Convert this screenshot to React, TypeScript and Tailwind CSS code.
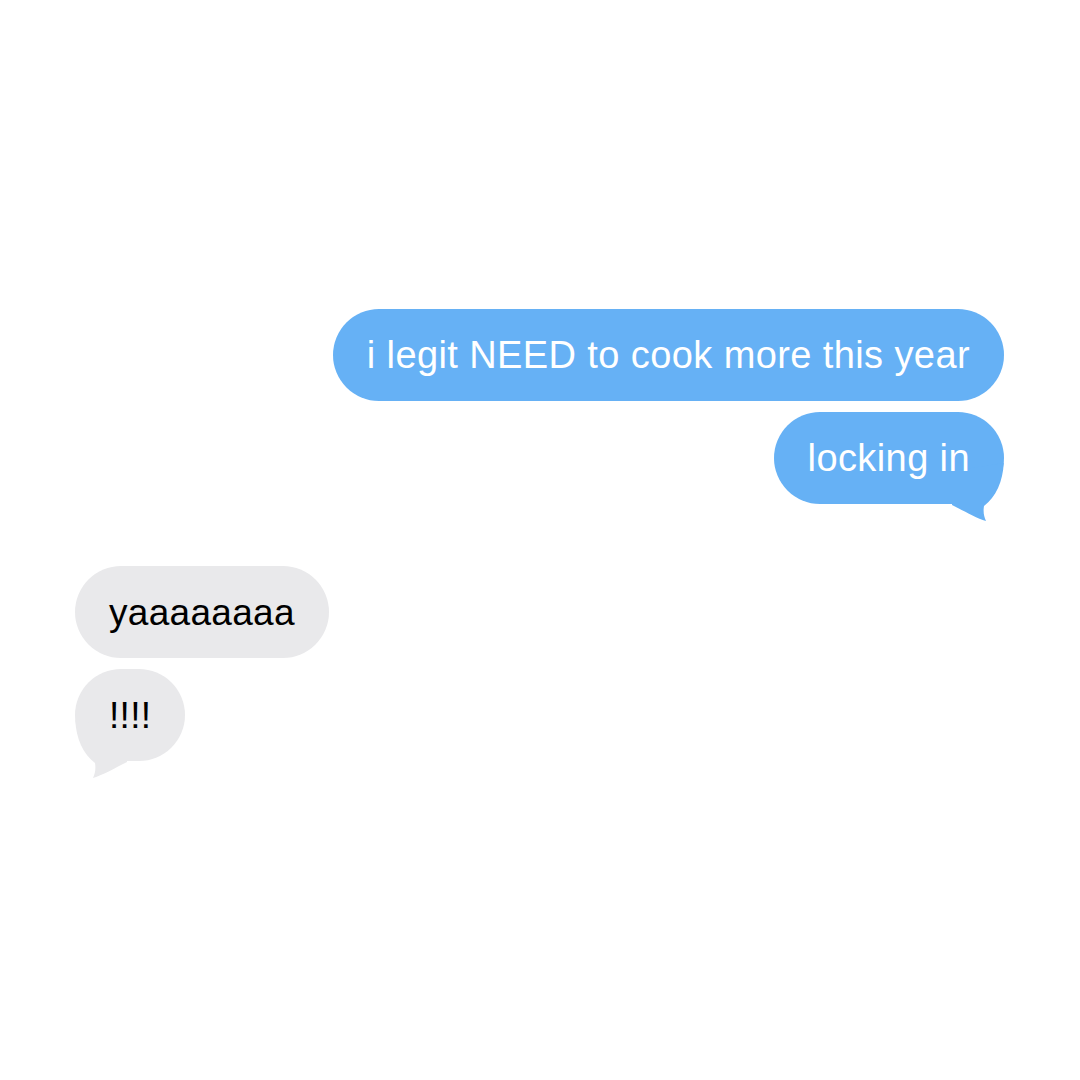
import React from 'react'

type Side = 'me' | 'them'

const Tail = ({ side }: { side: Side }) => {
  if (side === 'me') {
    return (
      <svg className="absolute right-0 bottom-[-19px]" width="52" height="62" viewBox="0 0 52 62">
        <path
          d="M51.7 2 C51 20 44 36 32 45 C31 51 32 56 34 60 C24 57 12 50 0 44 L0 10 Z"
          fill="#66b1f5"
        />
      </svg>
    )
  }
  return (
    <svg className="absolute left-0 bottom-[-19px]" width="52" height="62" viewBox="0 0 52 62">
      <path
        d="M0.3 2 C1 20 8 36 20 45 C21 51 20 56 18 60 C28 57 40 50 52 44 L52 10 Z"
        fill="#e9e9eb"
      />
    </svg>
  )
}

const Bubble = ({ text, side, tail }: { text: string; side: Side; tail?: boolean }) => {
  const isMe = side === 'me'
  return (
    <div className={isMe ? 'flex justify-end' : 'flex justify-start'}>
      <div
        className={
          isMe
            ? 'relative h-[92px] rounded-full bg-[#66b1f5] px-[34px] flex items-center text-white'
            : 'relative h-[92px] rounded-full bg-[#e9e9eb] px-[34px] flex items-center text-black'
        }
      >
        {tail && <Tail side={side} />}
        <span
          className={
            isMe
              ? 'relative text-[38px] leading-none tracking-[0.4px]'
              : 'relative text-[37px] leading-none tracking-[0.3px]'
          }
        >
          {text}
        </span>
      </div>
    </div>
  )
}

export default function App() {
  return (
    <div
      className="w-[1080px] h-[1080px] bg-white overflow-hidden"
      style={{ fontFamily: '"Liberation Sans", Arial, sans-serif' }}
    >
      <div className="pt-[309px] pl-[75px] pr-[76px] flex flex-col">
        <Bubble side="me" text="i legit NEED to cook more this year" />
        <div className="mt-[11px]">
          <Bubble side="me" text="locking in" tail />
        </div>
        <div className="mt-[62px]">
          <Bubble side="them" text="yaaaaaaaa" />
        </div>
        <div className="mt-[11px]">
          <Bubble side="them" text="!!!!" tail />
        </div>
      </div>
    </div>
  )
}
